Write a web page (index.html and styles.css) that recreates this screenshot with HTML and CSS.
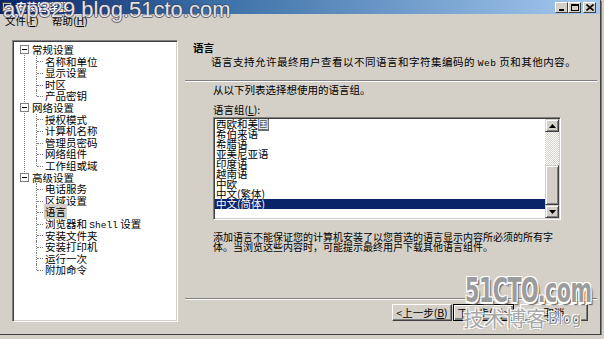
FILE: index.html
```html
<!DOCTYPE html>
<html lang="zh-CN">
<head>
    <meta charset="UTF-8">
    <title>安装管理器</title>
    <link rel="stylesheet" href="styles.css">
</head>
<body>
    <div class="window">
        <div class="titlebar">
            <svg class="title-icon" width="10" height="10" viewBox="0 0 10 10">
                <rect x="0.5" y="0.5" width="9" height="9" fill="#c0c0c0" stroke="#404040"/>
                <rect x="2" y="2" width="6" height="3" fill="#0a246a"/>
                <rect x="2" y="6" width="6" height="2" fill="#fff"/>
            </svg>
            <span class="title-text">安装管理器</span>
            <div class="title-buttons">
                <span class="tbtn">
                    <svg width="8" height="7" viewBox="0 0 8 7"><rect x="1" y="5" width="5" height="2" fill="#000"/></svg>
                </span>
                <span class="tbtn">
                    <svg width="8" height="7" viewBox="0 0 8 7"><rect x="0.5" y="0.5" width="7" height="6" fill="none" stroke="#000"/><rect x="0" y="0" width="8" height="2" fill="#000"/></svg>
                </span>
                <span class="tbtn close">
                    <svg width="8" height="7" viewBox="0 0 8 7"><path d="M0.5 0.5 L7.5 6.5 M7.5 0.5 L0.5 6.5" stroke="#000" stroke-width="1.6"/></svg>
                </span>
            </div>
        </div>

        <div class="menubar">
            <span>文件(<u>F</u>)</span>
            <span>帮助(<u>H</u>)</span>
        </div>

        <div class="client">
            <div class="tree-box">
                <ul class="tree">
                    <li class="group">
                        <div class="group-head"><span class="toggle"></span><span>常规设置</span></div>
                        <ul class="children">
                            <li>名称和单位</li>
                            <li>显示设置</li>
                            <li>时区</li>
                            <li>产品密钥</li>
                        </ul>
                    </li>
                    <li class="group">
                        <div class="group-head"><span class="toggle"></span><span>网络设置</span></div>
                        <ul class="children">
                            <li>授权模式</li>
                            <li>计算机名称</li>
                            <li>管理员密码</li>
                            <li>网络组件</li>
                            <li>工作组或域</li>
                        </ul>
                    </li>
                    <li class="group">
                        <div class="group-head"><span class="toggle"></span><span>高级设置</span></div>
                        <ul class="children">
                            <li>电话服务</li>
                            <li>区域设置</li>
                            <li><span class="selected">语言</span></li>
                            <li>浏览器和 <span class="mono">Shell</span> 设置</li>
                            <li>安装文件夹</li>
                            <li>安装打印机</li>
                            <li>运行一次</li>
                            <li>附加命令</li>
                        </ul>
                    </li>
                </ul>
            </div>

            <div class="panel">
                <div class="heading">语言</div>
                <div class="desc">语言支持允许最终用户查看以不同语言和字符集编码的 <span class="mono">Web</span> 页和其他内容。</div>
                <div class="sep"></div>

                <div class="body">
                    <div class="prompt">从以下列表选择想使用的语言组。</div>
                    <div class="label">语言组(<u>L</u>):</div>
                    <div class="listbox">
                        <ul class="items">
                            <li>西欧和美<span class="caret">国</span></li>
                            <li>希伯来语</li>
                            <li>希腊语</li>
                            <li>亚美尼亚语</li>
                            <li>印度语</li>
                            <li>越南语</li>
                            <li>中欧</li>
                            <li>中文(繁体)</li>
                            <li class="active">中文(简体)</li>
                        </ul>
                        <div class="scrollbar">
                            <span class="sbtn">
                                <svg width="7" height="4" viewBox="0 0 7 4"><path d="M3.5 0 L7 4 L0 4 Z" fill="#000"/></svg>
                            </span>
                            <span class="track"></span>
                            <span class="thumb"></span>
                            <span class="sbtn">
                                <svg width="7" height="4" viewBox="0 0 7 4"><path d="M0 0 L7 0 L3.5 4 Z" fill="#000"/></svg>
                            </span>
                        </div>
                    </div>
                    <div class="note">添加语言不能保证您的计算机安装了以您首选的语言显示内容所必须的所有字<br>体。当浏览这些内容时，可能提示最终用户下载其他语言组件。</div>
                </div>

                <div class="sep sep-bottom"></div>
                <div class="buttons">
                    <button class="btn">&lt;上一步(<u>B</u>)</button>
                    <button class="btn default">下一步(<u>N</u>)&gt;</button>
                    <button class="btn cancel">取消</button>
                </div>
            </div>
        </div>

        <!-- 水印 -->
        <div class="wm-top">avp329 blog.51cto.com</div>
        <div class="wm-logo">51CTO.com</div>
        <div class="wm-cn">技术博客</div>
        <div class="wm-blog">Blog</div>
    </div>
</body>
</html>
```

FILE: styles.css
```css
body {
    margin: 0;
    background: #d4d0c8;
    font-family: "Noto Sans CJK SC", "DejaVu Sans", sans-serif;
    font-size: 10.5px;
    color: #000;
}

ul {
    list-style: none;
    margin: 0;
    padding: 0;
}

.window {
    position: relative;
    width: 600px;
    height: 334px;
    background: #d4d0c8;
    border-right: 1px solid #404040;
    border-bottom: 1px solid #404040;
    box-shadow: 1px 1px 0 #808080;
    overflow: hidden;
}

/* 标题栏 */
.titlebar {
    height: 14px;
    display: flex;
    align-items: center;
    padding: 0 4px 0 2px;
    background: linear-gradient(to right, #0a246a 0%, #3a6ea5 35%, #a6caf0 100%);
}

.title-text {
    margin-left: 4px;
    color: #fff;
    font-weight: bold;
    line-height: 12px;
}

.title-buttons {
    margin-left: auto;
    display: flex;
}

.tbtn {
    width: 13px;
    height: 11px;
    box-sizing: border-box;
    display: flex;
    align-items: center;
    justify-content: center;
    background: #d4d0c8;
    border-top: 1px solid #fff;
    border-left: 1px solid #fff;
    border-right: 1px solid #404040;
    border-bottom: 1px solid #404040;
}

.tbtn.close {
    margin-left: 2px;
}

/* 菜单 */
.menubar {
    height: 14px;
    display: flex;
    align-items: center;
    gap: 13px;
    padding-left: 5px;
    line-height: 12px;
}

/* 主体 */
.client {
    display: flex;
    padding: 12px 0 0 12px;
}

.tree-box {
    width: 166px;
    height: 282px;
    box-sizing: border-box;
    background: #fff;
    border: 1px solid;
    border-color: #808080 #fff #fff #808080;
    box-shadow: inset 1px 1px 0 #404040, inset -1px -1px 0 #d4d0c8;
}

.tree {
    padding: 3px 0 0 4px;
}

.group {
    position: relative;
}

.group:not(:last-child)::before {
    content: "";
    position: absolute;
    left: 7px;
    top: 6px;
    bottom: -6px;
    border-left: 1px dotted #808080;
}

.group-head {
    display: flex;
    align-items: center;
    height: 11.6px;
    line-height: 11.6px;
}

.toggle {
    position: relative;
    z-index: 1;
    width: 9px;
    height: 9px;
    box-sizing: border-box;
    margin: 0 3px;
    border: 1px solid #808080;
    background: #fff;
}

.toggle::after {
    content: "";
    position: absolute;
    left: 1px;
    top: 3px;
    width: 5px;
    height: 1px;
    background: #000;
}

.children {
    margin-left: 19px;
}

.children li {
    position: relative;
    height: 11.6px;
    line-height: 11.6px;
    padding-left: 9px;
    white-space: nowrap;
}

.children li::before {
    content: "";
    position: absolute;
    left: 0;
    top: 0;
    height: 100%;
    border-left: 1px dotted #808080;
}

.children li:last-child::before {
    height: 50%;
}

.children li::after {
    content: "";
    position: absolute;
    left: 1px;
    top: 50%;
    width: 6px;
    border-top: 1px dotted #808080;
}

.selected {
    background: #d4d0c8;
    padding: 0 1px;
    margin-left: -1px;
}

.mono {
    font-family: "Liberation Mono", monospace;
    font-size: 9.5px;
    line-height: 1;
}

/* 右侧面板 */
.panel {
    flex: 1;
    margin-left: 7px;
    margin-right: 3px;
}

.heading {
    margin-top: 2px;
    padding-left: 8px;
    font-weight: bold;
    height: 12px;
    line-height: 12px;
}

.desc {
    margin-top: 2px;
    padding-left: 26px;
    height: 12px;
    line-height: 12px;
    letter-spacing: 0.5px;
    white-space: nowrap;
}

.sep {
    height: 0;
    margin-top: 12px;
    border-top: 1px solid #808080;
    border-bottom: 1px solid #fff;
}

.body {
    padding-left: 28px;
}

.prompt {
    margin-top: 2px;
    height: 12px;
    line-height: 12px;
}

.label {
    margin-top: 8px;
    height: 12px;
    line-height: 12px;
}

.listbox {
    margin-top: 1px;
    width: 348px;
    height: 103px;
    box-sizing: border-box;
    display: flex;
    background: #fff;
    border: 1px solid;
    border-color: #808080 #fff #fff #808080;
    box-shadow: inset 1px 1px 0 #404040, inset -1px -1px 0 #d4d0c8;
    padding: 1px;
}

.items {
    flex: 1;
    overflow: hidden;
}

.items li {
    height: 10px;
    line-height: 10px;
    padding-left: 1px;
    white-space: nowrap;
}

.items li.active {
    background: #0a246a;
    color: #fff;
}

.caret {
    background: #6b6b6b;
    color: #fff;
}

.scrollbar {
    width: 14px;
    display: flex;
    flex-direction: column;
}

.sbtn {
    height: 13px;
    display: flex;
    align-items: center;
    justify-content: center;
    box-sizing: border-box;
    background: #d4d0c8;
    border: 1px solid;
    border-color: #d4d0c8 #404040 #404040 #d4d0c8;
    box-shadow: inset 1px 1px 0 #fff, inset -1px -1px 0 #808080;
}

.track {
    height: 33px;
    background: repeating-conic-gradient(#fff 0 25%, #d4d0c8 0 50%) 0 0 / 2px 2px;
}

.thumb {
    height: 40px;
    box-sizing: border-box;
    background: #d4d0c8;
    border: 1px solid;
    border-color: #d4d0c8 #404040 #404040 #d4d0c8;
    box-shadow: inset 1px 1px 0 #fff, inset -1px -1px 0 #808080;
}

.note {
    margin-top: 12px;
    font-size: 10px;
    height: 20px;
    line-height: 10px;
    white-space: nowrap;
}

.sep-bottom {
    margin-top: 46px;
}

.buttons {
    display: flex;
    justify-content: flex-end;
    margin-top: 4px;
    padding-right: 9px;
}

.btn {
    height: 17px;
    width: 60px;
    padding: 0;
    font: inherit;
    line-height: 12px;
    background: #d4d0c8;
    border: 1px solid;
    border-color: #fff #404040 #404040 #fff;
    box-shadow: inset -1px -1px 0 #808080;
}

.btn.default {
    width: 61px;
    margin-left: 1px;
    border-color: #000;
    box-shadow: inset 1px 1px 0 #fff, inset -2px -2px 0 #808080;
}

.btn.cancel {
    width: 68px;
    margin-left: 6px;
}

/* 水印 */
.wm-top {
    position: absolute;
    left: 3px;
    top: -3px;
    font-family: "Liberation Sans", Arial, sans-serif;
    font-size: 22px;
    color: #e2e2e8;
    text-shadow: 1px 0 0 rgba(60, 60, 75, 0.7), -1px 0 0 rgba(60, 60, 75, 0.7), 0 1px 0 rgba(60, 60, 75, 0.7), 0 -1px 0 rgba(60, 60, 75, 0.5);
    white-space: nowrap;
}

.wm-logo {
    position: absolute;
    left: 465px;
    top: 272px;
    font-family: "DejaVu Sans Condensed", "DejaVu Sans", sans-serif;
    font-weight: bold;
    font-size: 23px;
    line-height: 24px;
    letter-spacing: -0.5px;
    transform: scaleY(1.5);
    transform-origin: left top;
    color: #9c9c9c;
    text-shadow: 1px 1px 0 #fff, -1px -1px 0 #fff, 1px -1px 0 #fff, -1px 1px 0 #fff, 2px 2px 1px #555;
    white-space: nowrap;
}

.wm-cn {
    position: absolute;
    left: 463px;
    top: 302px;
    font-size: 21px;
    line-height: 30px;
    color: #a8a8a8;
    text-shadow: 1px 1px 0 #fff, -1px -1px 0 #fff, 1px -1px 0 #fff, -1px 1px 0 #fff, 1px 1px 1px #555;
    white-space: nowrap;
}

.wm-blog {
    position: absolute;
    left: 548px;
    top: 309px;
    font-family: "DejaVu Sans", sans-serif;
    font-size: 15px;
    line-height: 20px;
    color: #9a9a9a;
    text-shadow: 1px 1px 0 #fff, -1px -1px 0 #fff, 1px 1px 1px #666;
    white-space: nowrap;
}
```
